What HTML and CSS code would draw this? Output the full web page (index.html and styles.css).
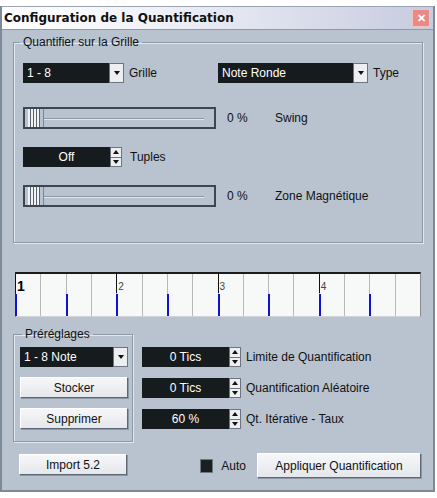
FILE: index.html
```html
<!DOCTYPE html>
<html lang="fr">
<head>
<meta charset="UTF-8">
<title>Configuration de la Quantification</title>
<link rel="stylesheet" href="styles.css">
</head>
<body>

<div class="window">
    <div class="titlebar">
        <span class="title">Configuration de la Quantification</span>
        <span class="close">&#x2715;</span>
    </div>

    <div class="content">
        <fieldset class="group grid-group">
            <legend>Quantifier sur la Grille</legend>

            <div class="row combos">
                <div class="field">
                    <div class="combo combo-grille">
                        <span class="combo-value">1 - 8</span>
                        <span class="combo-btn"></span>
                    </div>
                    <span class="label">Grille</span>
                </div>
                <div class="field">
                    <div class="combo combo-type">
                        <span class="combo-value">Note Ronde</span>
                        <span class="combo-btn"></span>
                    </div>
                    <span class="label">Type</span>
                </div>
            </div>

            <div class="row slider-row">
                <div class="slider"><span class="thumb"></span><span class="track"></span></div>
                <span class="pct">0 %</span>
                <span class="label">Swing</span>
            </div>

            <div class="row tuples-row">
                <div class="spin">
                    <span class="spin-value">Off</span>
                    <span class="spin-btns"><span class="spin-up"></span><span class="spin-down"></span></span>
                </div>
                <span class="label">Tuples</span>
            </div>

            <div class="row slider-row">
                <div class="slider"><span class="thumb"></span><span class="track"></span></div>
                <span class="pct">0 %</span>
                <span class="label">Zone Magnétique</span>
            </div>
        </fieldset>

        <div class="ruler">
            <div class="cell beat eighth"><div class="mark-top"><span class="num num-first">1</span></div><div class="mark-blue"></div></div>
            <div class="cell"><div class="mark-top"></div><div class="mark-blue"></div></div>
            <div class="cell eighth"><div class="mark-top"></div><div class="mark-blue"></div></div>
            <div class="cell"><div class="mark-top"></div><div class="mark-blue"></div></div>
            <div class="cell beat eighth"><div class="mark-top"><span class="num">2</span></div><div class="mark-blue"></div></div>
            <div class="cell"><div class="mark-top"></div><div class="mark-blue"></div></div>
            <div class="cell eighth"><div class="mark-top"></div><div class="mark-blue"></div></div>
            <div class="cell"><div class="mark-top"></div><div class="mark-blue"></div></div>
            <div class="cell beat eighth"><div class="mark-top"><span class="num">3</span></div><div class="mark-blue"></div></div>
            <div class="cell"><div class="mark-top"></div><div class="mark-blue"></div></div>
            <div class="cell eighth"><div class="mark-top"></div><div class="mark-blue"></div></div>
            <div class="cell"><div class="mark-top"></div><div class="mark-blue"></div></div>
            <div class="cell beat eighth"><div class="mark-top"><span class="num">4</span></div><div class="mark-blue"></div></div>
            <div class="cell"><div class="mark-top"></div><div class="mark-blue"></div></div>
            <div class="cell eighth"><div class="mark-top"></div><div class="mark-blue"></div></div>
            <div class="cell"><div class="mark-top"></div><div class="mark-blue"></div></div>
        </div>

        <div class="bottom">
            <fieldset class="group presets">
                <legend>Préréglages</legend>
                <div class="combo combo-preset">
                    <span class="combo-value">1 - 8 Note</span>
                    <span class="combo-btn"></span>
                </div>
                <button class="btn btn-preset">Stocker</button>
                <button class="btn btn-preset">Supprimer</button>
            </fieldset>

            <div class="params">
                <div class="param">
                    <div class="spin">
                        <span class="spin-value">0 Tics</span>
                        <span class="spin-btns"><span class="spin-up"></span><span class="spin-down"></span></span>
                    </div>
                    <span class="label">Limite de Quantification</span>
                </div>
                <div class="param">
                    <div class="spin">
                        <span class="spin-value">0 Tics</span>
                        <span class="spin-btns"><span class="spin-up"></span><span class="spin-down"></span></span>
                    </div>
                    <span class="label">Quantification Aléatoire</span>
                </div>
                <div class="param">
                    <div class="spin">
                        <span class="spin-value">60 %</span>
                        <span class="spin-btns"><span class="spin-up"></span><span class="spin-down"></span></span>
                    </div>
                    <span class="label">Qt. Itérative - Taux</span>
                </div>
            </div>

            <button class="btn btn-import">Import 5.2</button>

            <div class="apply-row">
                <span class="check"></span>
                <span class="label">Auto</span>
                <button class="btn btn-apply">Appliquer Quantification</button>
            </div>
        </div>
    </div>
</div>

</body>
</html>
```

FILE: styles.css
```css
body {
    margin: 0;
    background: #fff;
    font-family: "Liberation Sans", Arial, sans-serif;
    font-size: 12px;
    color: #111;
}
.window {
    width: 431px;
    height: 483px;
    margin-top: 6px;
    border: 2px solid #7d8898;
    border-top: 1px solid #9aa4b2;
    background: #b8c3cf;
}
.titlebar {
    height: 22px;
    display: flex;
    align-items: center;
    justify-content: space-between;
    padding: 0 3px 0 2px;
    background: linear-gradient(to right, #ffffff 0%, #f0f2f8 35%, #c6cbdf 100%);
    border-bottom: 1px solid #8e98a8;
}
.title {
    font-family: "DejaVu Sans", Verdana, sans-serif;
    font-weight: bold;
    font-size: 12px;
    color: #101010;
}
.close {
    width: 16px;
    height: 16px;
    display: flex;
    align-items: center;
    justify-content: center;
    background: #e98a86;
    border: 1px solid #f4c2c0;
    color: #fff;
    font-size: 11px;
    font-weight: bold;
}
.content {
    padding: 5px 10px 0 11px;
}
.group {
    margin: 0;
    border: 1px solid #8c98a6;
    box-shadow: inset 1px 1px 0 #e2e8ee, 1px 1px 0 #e2e8ee;
}
.group legend {
    padding: 0 3px;
    line-height: 14px;
    font-size: 12px;
}
.grid-group {
    padding: 14px 9px 35px 9px;
}
.grid-group legend { margin-left: -3px; }
.row {
    display: flex;
    align-items: center;
}
.combos {
    display: grid;
    grid-template-columns: 195px auto;
}
.field {
    display: flex;
    align-items: center;
    gap: 5px;
}
.combo {
    display: flex;
    height: 20px;
    background: #161c1e;
}
.combo-grille { width: 101px; }
.combo-type { width: 150px; }
.combo-preset { width: 108px; }
.combo-value {
    flex: 1;
    color: #fff;
    line-height: 20px;
    padding-left: 4px;
}
.combo-btn {
    width: 15px;
    background: #eceef2;
    border: 1px solid #6c7480;
    box-sizing: border-box;
    display: flex;
    align-items: center;
    justify-content: center;
}
.combo-btn::after {
    content: "";
    border-left: 3px solid transparent;
    border-right: 3px solid transparent;
    border-top: 4px solid #111;
}
.slider-row { margin-top: 24px; }
.tuples-row + .slider-row { margin-top: 18px; }
.tuples-row { margin-top: 18px; gap: 8px; }
.slider {
    width: 193px;
    height: 22px;
    box-sizing: border-box;
    border: 2px solid #3c4652;
    display: flex;
    align-items: stretch;
}
.thumb {
    width: 12px;
    padding: 0 3px;
    background-color: #f0f2f4;
    background-image: repeating-linear-gradient(to right, #f0f2f4 0, #f0f2f4 2px, #58626c 2px, #58626c 3px);
    background-clip: content-box;
    background-origin: content-box;
    border-right: 1px solid #7c8690;
}
.track {
    flex: 1;
    margin: 9px 10px 0 0;
    height: 1px;
    background: #8b97a4;
    border-bottom: 1px solid #e3e8ee;
}
.pct {
    width: 48px;
    margin-left: 11px;
}
.spin {
    display: flex;
    height: 20px;
}
.spin-value {
    width: 87px;
    background: #161c1e;
    color: #fff;
    text-align: center;
    line-height: 20px;
}
.spin-btns {
    width: 12px;
    display: flex;
    flex-direction: column;
}
.spin-up, .spin-down {
    flex: 1;
    background: #eceef2;
    border: 1px solid #6c7480;
    display: flex;
    align-items: center;
    justify-content: center;
}
.spin-down { border-top: none; }
.spin-up::after {
    content: "";
    border-left: 3px solid transparent;
    border-right: 3px solid transparent;
    border-bottom: 4px solid #111;
}
.spin-down::after {
    content: "";
    border-left: 3px solid transparent;
    border-right: 3px solid transparent;
    border-top: 4px solid #111;
}
.ruler {
    margin: 29px 0 0 2px;
    width: 406px;
    height: 45px;
    box-sizing: border-box;
    display: flex;
    background: #f7f8f8;
    border-top: 2px solid #1c1c1c;
    border-left: 1px solid #303030;
    border-right: 1px solid #8a8a8a;
    border-bottom: 1px solid #d0d4d8;
}
.cell {
    flex: 1;
    display: flex;
    flex-direction: column;
    justify-content: space-between;
    border-left: 1px solid #b8b8b8;
}
.cell:first-child { border-left: none; }
.mark-top {
    height: 19px;
    margin-left: -1px;
}
.beat .mark-top { border-left: 1px solid #111; }
.mark-blue {
    height: 22px;
    margin-left: -1px;
}
.eighth .mark-blue { border-left: 2px solid #1212d4; }
.num {
    display: block;
    padding: 8px 0 0 1px;
    font-size: 10px;
    line-height: 10px;
    color: #444;
}
.num-first {
    padding-top: 6px;
    font-size: 14px;
    line-height: 12px;
    font-weight: bold;
    color: #000;
}
.bottom {
    margin-top: 10px;
    display: grid;
    grid-template-columns: 120px 1fr;
    column-gap: 9px;
    row-gap: 11px;
}
.presets {
    padding: 6px 4px 12px 6px;
    display: flex;
    flex-direction: column;
    gap: 10px;
}
.presets legend { margin-left: 2px; }
.btn {
    font-family: inherit;
    font-size: 12px;
    color: #111;
    background: linear-gradient(#f6f7f9, #e4e7eb);
    border: 1px solid;
    border-color: #ffffff #5e6874 #5e6874 #ffffff;
    box-shadow: 1px 1px 0 #8e98a4;
    padding: 0;
}
.btn-preset {
    width: 108px;
    height: 21px;
}
.params {
    padding-top: 20px;
    display: flex;
    flex-direction: column;
    gap: 11px;
}
.param {
    display: flex;
    align-items: center;
    gap: 5px;
}
.btn-import {
    width: 108px;
    height: 21px;
    margin: 1px 0 0 6px;
}
.apply-row {
    display: flex;
    align-items: center;
    justify-content: flex-end;
    padding-right: 2px;
}
.check {
    width: 11px;
    height: 12px;
    background: #1a2022;
    border: 1px solid #6e7882;
}
.apply-row .label {
    margin: 0 11px 0 8px;
}
.btn-apply {
    width: 164px;
    height: 25px;
}
```
